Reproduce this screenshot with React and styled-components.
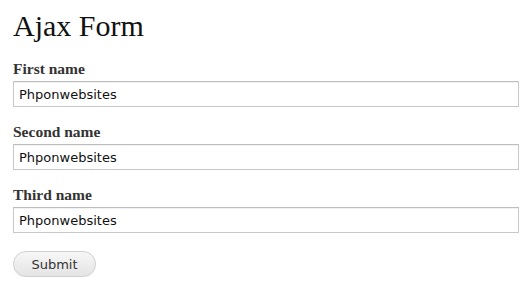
import React from 'react';
import styled, { createGlobalStyle } from 'styled-components';

const GlobalStyle = createGlobalStyle`
  body {
    margin: 0;
    background: #fff;
  }
`

const Page = styled.div`
    padding: 8px 13px 0 13px;
`
const Title = styled.h1`
    margin: 0 0 16px 0;
    font: normal 30px/36px "Liberation Serif", Georgia, serif;
    color: #111;
`
const Field = styled.div`
    display: flex;
    flex-direction: column;
    margin-bottom: 16px;
`
const Label = styled.label`
    font: bold 15.5px/18px "Liberation Serif", Georgia, serif;
    color: #333;
    margin-bottom: 3px;
`
const Input = styled.input`
    box-sizing: border-box;
    width: 100%;
    height: 26px;
    margin: 0;
    padding: 0 5px;
    border: 1px solid #c8c8c8;
    border-top-color: #bdbdbd;
    box-shadow: inset 0 1px 0 #f2f2f2;
    font: 13px "DejaVu Sans", Verdana, sans-serif;
    color: #111;
    outline: none;
`
const Button = styled.button`
    margin-top: 2px;
    width: 83px;
    height: 26px;
    border: 1px solid #d0d0d0;
    border-radius: 13px;
    background: linear-gradient(#f7f7f7, #e4e4e4);
    box-shadow: 0 1px 1px rgba(0,0,0,0.06);
    font: 13px "DejaVu Sans", Verdana, sans-serif;
    color: #333;
    padding: 0;
`

const fields = ['First name', 'Second name', 'Third name']

export default function App() {
    return (
        <Page>
            <GlobalStyle />
            <Title>Ajax Form</Title>
            <form onSubmit={(e) => e.preventDefault()}>
                {fields.map((name) => (
                    <Field key={name}>
                        <Label>{name}</Label>
                        <Input defaultValue="Phponwebsites" />
                    </Field>
                ))}
                <Button type="submit">Submit</Button>
            </form>
        </Page>
    )
}
